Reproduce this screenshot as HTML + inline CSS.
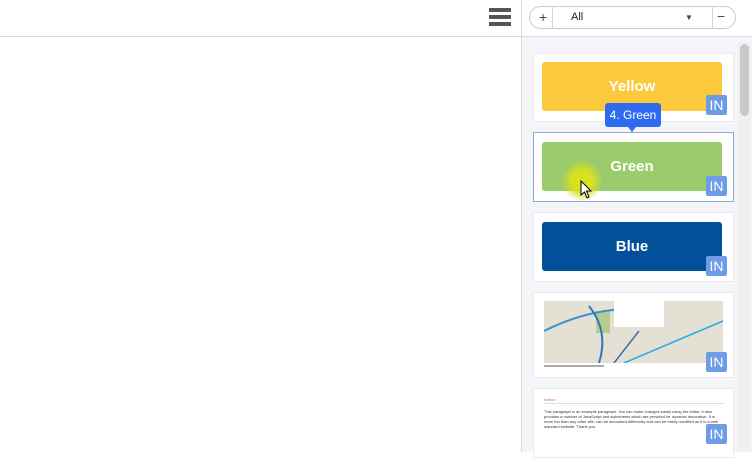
<!DOCTYPE html>
<html><head><style>
*{margin:0;padding:0;box-sizing:border-box}
body{width:752px;height:452px;overflow:hidden;background:#fff;font-family:"Liberation Sans",Arial,sans-serif;position:relative}
.a{position:absolute}
.card{position:absolute;left:533px;width:201px;background:#fff;border:1px solid #e8eaf0}
.btn{position:absolute;left:8px;width:180px;height:49px;border-radius:3px;color:#fff;font-weight:bold;font-size:15px;text-align:center;line-height:49px}
.in{position:absolute;left:172px;width:21px;height:20px;background:#6e9be6;color:#fff;font-size:14px;line-height:20px;text-align:center;border-radius:2px}
.hb{position:absolute;left:489px;width:22px;height:4px;background:#555}
</style></head><body>
<div class="a" style="left:0;top:36px;width:522px;height:1px;background:#d8dbe2"></div>
<div class="a" style="left:521px;top:0;width:1px;height:452px;background:#d8dbe2"></div>
<div class="a" style="left:522px;top:37px;width:230px;height:415px;background:#f4f5f9"></div>
<div class="a" style="left:522px;top:36px;width:230px;height:1px;background:#d8dbe2"></div>
<div class="hb" style="top:8px"></div><div class="hb" style="top:15px"></div><div class="hb" style="top:22px"></div>
<div class="a" style="left:529px;top:6px;width:207px;height:23px;border:1px solid #c9ccd4;border-radius:12px;background:#fff"></div>
<div class="a" style="left:552px;top:6px;width:1px;height:23px;background:#d0d3da"></div>
<div class="a" style="left:712px;top:6px;width:1px;height:23px;background:#d0d3da"></div>
<div class="a" style="left:539px;top:9px;font-size:14px;color:#444">+</div>
<div class="a" style="left:571px;top:11px;font-size:11px;color:#222">All</div>
<div class="a" style="left:685px;top:13px;font-size:8px;color:#444">▼</div>
<div class="a" style="left:717px;top:8px;font-size:14px;color:#444">−</div>
<div class="a" style="left:738px;top:42px;width:13px;height:410px;background:#f0f0f3"></div>
<div class="a" style="left:740px;top:44px;width:9px;height:72px;background:#c9c9cc;border-radius:5px"></div>

<div class="card" style="top:53px;height:69px"><div class="btn" style="top:8px;background:#fdc93c">Yellow</div><div class="in" style="top:41px">IN</div></div>
<div class="card" style="top:132px;height:70px;border-color:#8fa8de"><div class="btn" style="top:9px;background:#9ccb6c">Green</div><div class="in" style="top:43px">IN</div></div>
<div class="card" style="top:212px;height:70px"><div class="btn" style="top:9px;background:#03509a">Blue</div><div class="in" style="top:43px">IN</div></div>
<div class="card" style="top:292px;height:86px"><div class="a" style="left:10px;top:8px;width:179px;height:62px;background:#e4e0d4"><svg width="179" height="62"><rect x="52" y="10" width="14" height="22" fill="#b8cc90"/><path d="M0 30 Q40 10 80 8" stroke="#3b8fd6" stroke-width="2" fill="none"/><path d="M45 5 Q65 30 55 62" stroke="#2a78c0" stroke-width="2" fill="none"/><path d="M70 62 L95 30" stroke="#3a6aa8" stroke-width="1.5" fill="none"/><path d="M80 62 Q120 45 179 20" stroke="#2aa8e8" stroke-width="1.5" fill="none"/><rect x="70" y="0" width="50" height="26" fill="#fff"/></svg></div><div class="a" style="left:10px;top:72px;width:60px;height:2px;background:#aaa"></div><div class="in" style="top:59px">IN</div></div>
<div class="card" style="top:388px;height:70px"><div class="a" style="left:10px;top:14px;width:180px;height:1px;background:#ddd"></div><div class="a" style="left:10px;top:8px;font-size:4px;color:#d66">Notice</div><div class="a" style="left:10px;top:20px;width:180px;font-size:4px;line-height:5px;color:#333">This paragraph is an example paragraph. You can make changes easily using the editor. It also provides a number of JavaScript and stylesheets which are provided for dynamic decoration. It is more fun than any other site, can be decorated differently and can be easily modified as it is a web standard website. Thank you.</div><div class="in" style="top:35px">IN</div></div>

<div class="a" style="left:561px;top:160px;width:42px;height:42px;border-radius:50%;background:radial-gradient(#d8e020 35%,rgba(230,235,60,0) 70%)"></div>
<svg class="a" style="left:580px;top:180px" width="14" height="20"><path d="M1 1 L1 15 L4.5 12 L7 18 L9 17 L6.5 11 L11 11 Z" fill="#fff" stroke="#000" stroke-width="1"/></svg>
<div class="a" style="left:605px;top:103px;width:56px;height:24px;background:#2f6bf0;border-radius:3px;color:#fff;font-size:12px;line-height:24px;text-align:center">4. Green</div>
<div class="a" style="left:628px;top:127px;width:0;height:0;border-left:4px solid transparent;border-right:4px solid transparent;border-top:5px solid #2f6bf0"></div>
</body></html>
